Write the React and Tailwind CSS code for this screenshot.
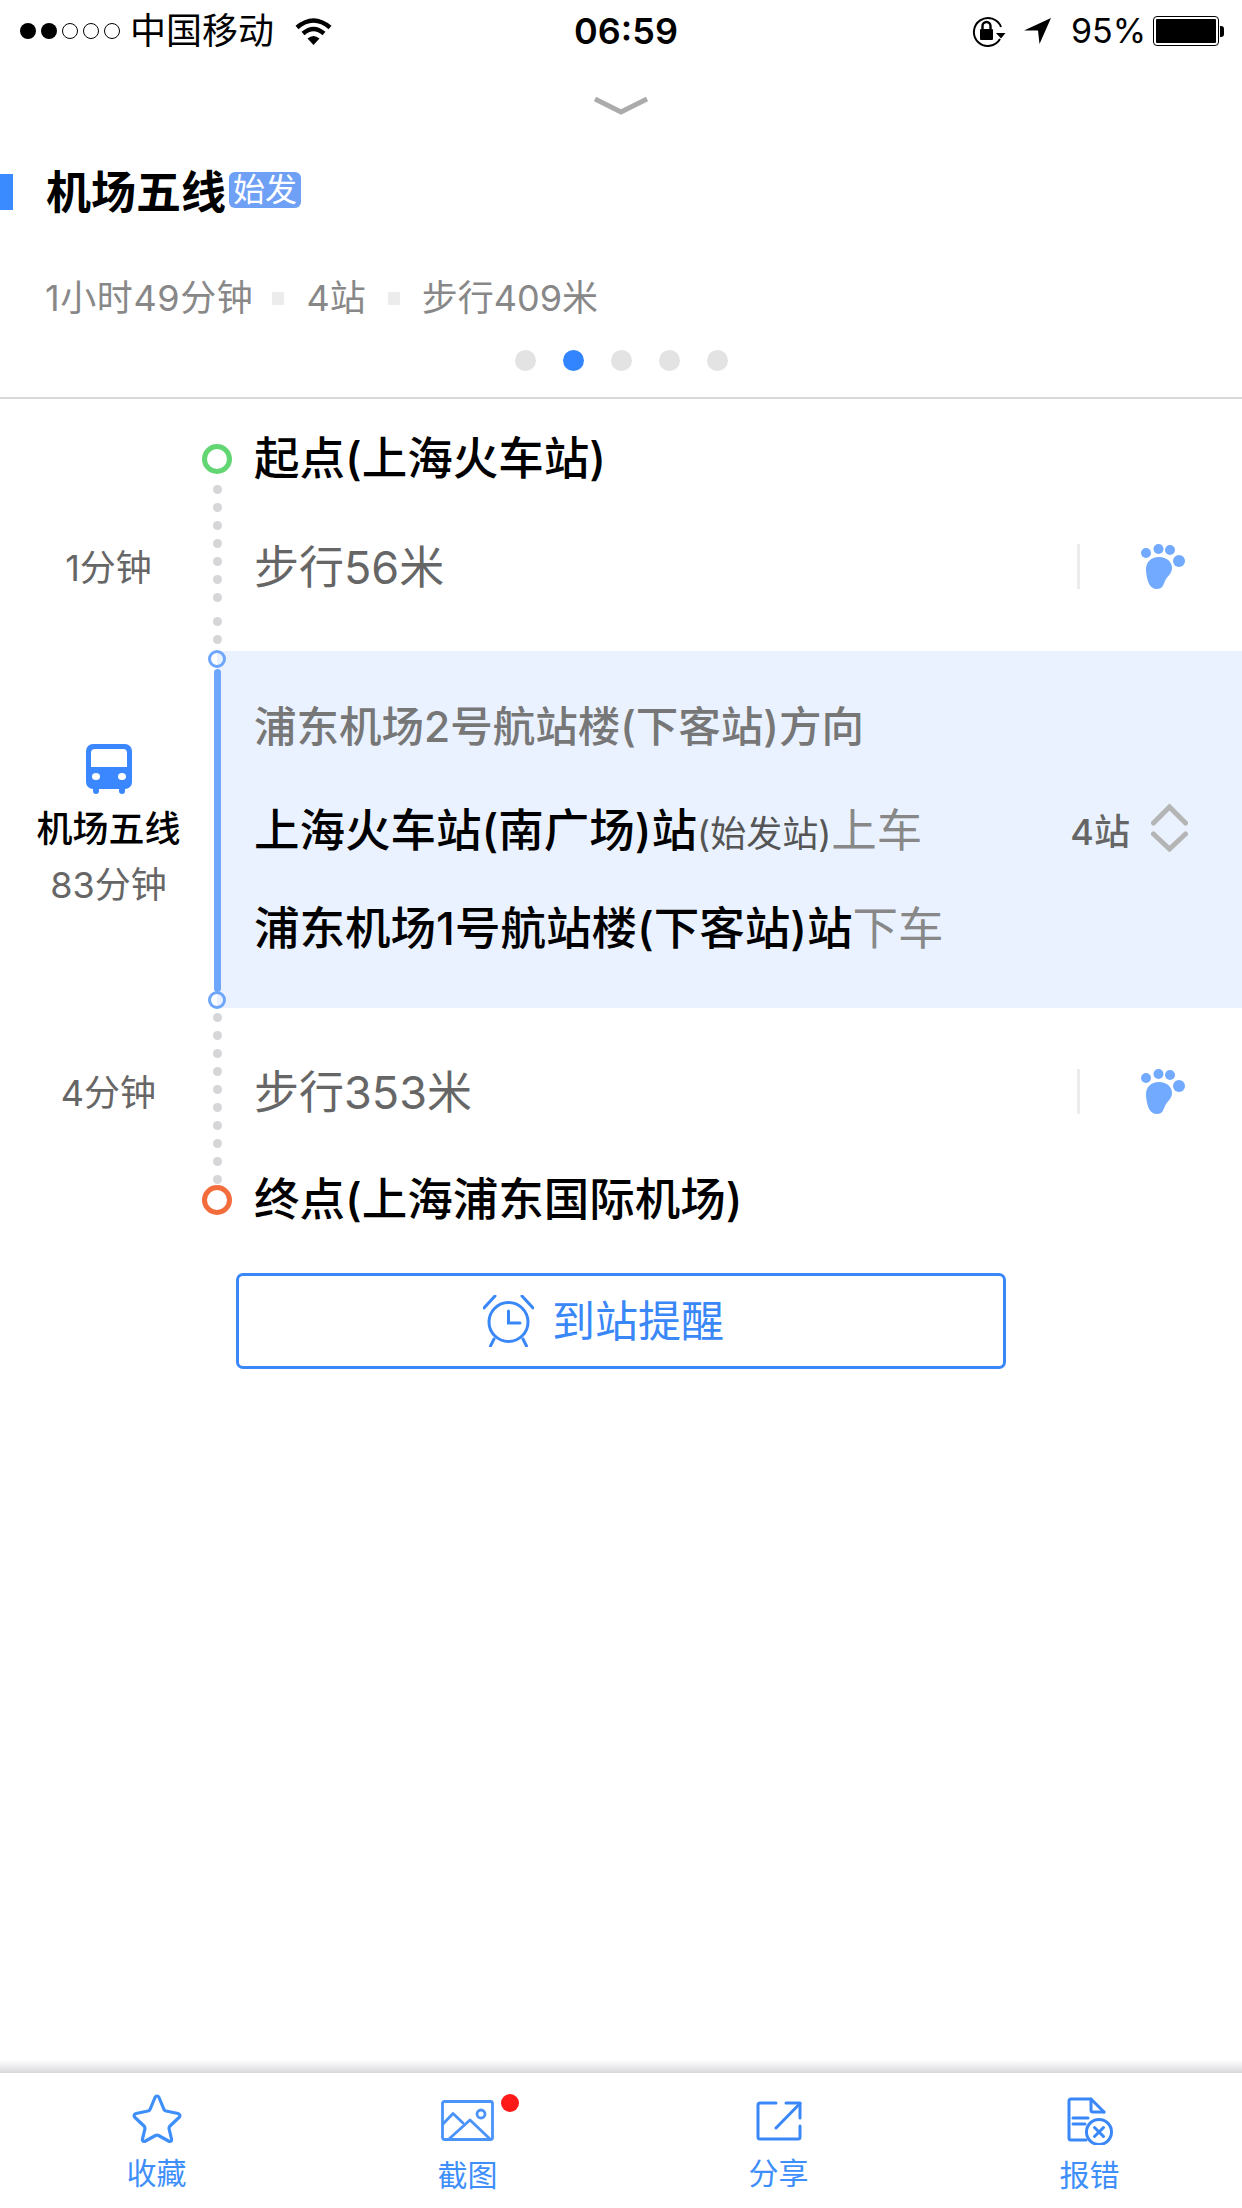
import React from 'react';

const BLUE = '#3a87f8';

const RailDots = ({ count, className = '' }) => (
    <div className={`flex flex-col items-center gap-[9px] ${className}`}>
        {Array.from({ length: count }).map((_, i) => (
            <span key={i} className="w-[9px] h-[9px] rounded-full bg-[#d6d6d9]" />
        ))}
    </div>
);

const Ring = ({ className }) => (
    <span className={`block w-[30px] h-[30px] rounded-full border-[5px] bg-white ${className}`} />
);

const Wifi = () => (
    <svg width="37" height="27" viewBox="0 0 37 27" fill="none" stroke="#000" strokeWidth="4.5">
        <path d="M2 9.5Q18.5 -4.5 35 9.5" />
        <path d="M8 15.5Q18.5 6.5 29 15.5" />
        <path d="M12.5 20.5Q18.5 15.5 24.5 20.5L18.5 27Z" fill="#000" stroke="none" />
    </svg>
);

const RotationLock = () => (
    <svg width="35" height="31" viewBox="0 0 35 31" fill="none">
        <path d="M30 11A14 14 0 1 0 29 23" stroke="#000" strokeWidth="2" />
        <path d="M25 17L34.5 17L30 22.5Z" fill="#000" />
        <rect x="9" y="13" width="13" height="11" rx="1" fill="#000" />
        <path d="M11.5 13V10a4 4 0 0 1 8 0V13" stroke="#000" strokeWidth="2.4" />
    </svg>
);

const LocationArrow = () => (
    <svg width="27" height="26" viewBox="0 0 27 26">
        <path d="M0 12.5L27 0L15.5 26L14 12.5Z" fill="#000" />
    </svg>
);

const Battery = () => (
    <div className="flex items-center">
        <div className="w-[66px] h-[30px] rounded-[4px] border border-black p-[2px]">
            <div className="h-full w-[60px] bg-black rounded-[1px]" />
        </div>
        <div className="w-[4px] h-[11px] ml-[1px] bg-black rounded-r-[3px]" />
    </div>
);

const Foot = () => (
    <svg width="44" height="45" viewBox="0 0 44 45" fill="#72aaff">
        <circle cx="5" cy="9" r="5" />
        <circle cx="17.5" cy="5" r="5" />
        <circle cx="29" cy="6" r="5" />
        <circle cx="38" cy="17" r="6" />
        <path d="M18 13C26 13 31 18 31 24C31 30 26 32 24 37C22 42 21 45 16 45C9 45 6 38 5 27C4.5 18 10 13 18 13Z" />
    </svg>
);

const Bus = () => (
    <svg width="46" height="50" viewBox="0 0 46 50">
        <path d="M7 0H39a7 7 0 0 1 7 7V38a7 7 0 0 1 -7 7H7a7 7 0 0 1 -7 -7V7a7 7 0 0 1 7 -7Z" fill="#3a87ff" />
        <rect x="7" y="42" width="6" height="8" rx="3" fill="#3a87ff" />
        <rect x="33" y="42" width="6" height="8" rx="3" fill="#3a87ff" />
        <path d="M9 5H37a4 4 0 0 1 4 4V23H5V9a4 4 0 0 1 4 -4Z" fill="#fff" />
        <ellipse cx="10" cy="32.5" rx="4" ry="3.5" fill="#fff" />
        <ellipse cx="36" cy="32.5" rx="4" ry="3.5" fill="#fff" />
    </svg>
);

const StopsToggle = () => (
    <svg width="37" height="49" viewBox="0 0 37 49" fill="none" stroke="#b5b5b5" strokeWidth="5" strokeLinecap="round" strokeLinejoin="miter" className="mb-[10px]">
        <path d="M2.5 20L18.5 4L34.5 20" />
        <path d="M2.5 31L18.5 46L34.5 31" />
    </svg>
);

const Alarm = () => (
    <svg width="51" height="52" viewBox="0 0 51 52" fill="none" stroke={BLUE} strokeWidth="3" strokeLinecap="round">
        <circle cx="25.5" cy="27" r="19.5" />
        <path d="M25.5 16V28H37" />
        <path d="M1 13L12 1" />
        <path d="M50 13L39 1" />
        <path d="M11 44L7.5 51" />
        <path d="M40 44L43.5 51" />
    </svg>
);

const StarIcon = () => (
    <svg width="50" height="49" viewBox="0 0 50 49" fill="none" stroke="#3f8ffb" strokeWidth="3.2" strokeLinejoin="round">
        <path d="M23 3.5C24 1.5 26 1.5 27 3.5L32 15.5C32.5 16.5 33 17 34 17L46 19.5C48 20 48.500 22 47 23.500L38 32C37 33 37 33.500 37 34.500L39.500 45C40 47 38.500 48 36.500 47L26.500 41.500C25.500 41 24.500 41 23.500 41.500L13.500 47C11.500 48 10 47 10.500 45L13 34.500C13 33.500 13 33 12 32L3 23.500C1.500 22 2 20 4 19.500L16 17C17 17 17.500 16.500 18 15.500Z" />
    </svg>
);

const ImageIcon = () => (
    <svg width="53" height="41" viewBox="0 0 53 41" fill="none" stroke="#4a93fb" strokeWidth="2.8" strokeLinejoin="round" strokeLinecap="round">
        <rect x="1.500" y="1.500" width="50" height="38" rx="2" />
        <path d="M2 24L12 13.500L22 23" />
        <path d="M8 39L29 20L49 39" />
        <circle cx="40" cy="14" r="4" />
    </svg>
);

const ShareIcon = () => (
    <svg width="46" height="40" viewBox="0 0 46 40" fill="none" stroke={BLUE} strokeWidth="3" strokeLinecap="round" strokeLinejoin="round">
        <path d="M20 2H4a2 2 0 0 0 -2 2V36a2 2 0 0 0 2 2H42a2 2 0 0 0 2 -2V25" />
        <path d="M30 2H44V17" />
        <path d="M20 27L44 2.500" />
    </svg>
);

const ReportIcon = () => (
    <svg width="46" height="48" viewBox="0 0 46 48" fill="none" stroke={BLUE} strokeWidth="3" strokeLinecap="round" strokeLinejoin="round">
        <path d="M19 43H4a2 2 0 0 1 -2 -2V4a2 2 0 0 1 2 -2H24L37 15" />
        <path d="M24 2V13a2 2 0 0 0 2 2H37" />
        <path d="M6 21H21" />
        <path d="M6 27H18" />
        <circle cx="32" cy="35" r="12.500" />
        <path d="M27.500 30.500L36.500 39.500" />
        <path d="M36.500 30.500L27.500 39.500" />
    </svg>
);

const StatusBar = () => (
    <div className="flex h-[62px] items-center text-black">
        <div className="w-[574px] flex items-center pl-[20px]">
            <div className="flex gap-[5px]">
                <span className="w-[16px] h-[16px] rounded-full bg-black" />
                <span className="w-[16px] h-[16px] rounded-full bg-black" />
                <span className="w-[16px] h-[16px] rounded-full border border-black" />
                <span className="w-[16px] h-[16px] rounded-full border border-black" />
                <span className="w-[16px] h-[16px] rounded-full border border-black" />
            </div>
            <span className="ml-[10px] text-[36px] leading-[40px]">中国移动</span>
            <span className="ml-[21px]"><Wifi /></span>
        </div>
        <span className="w-[106px] text-[36px] leading-[40px] font-semibold whitespace-nowrap">06:59</span>
        <div className="flex-1 flex items-center pl-[291px]">
            <RotationLock />
            <span className="ml-[18px]"><LocationArrow /></span>
            <span className="ml-[20px] w-[71px] text-[34px] leading-[40px] whitespace-nowrap">95%</span>
            <span className="ml-[11px]"><Battery /></span>
        </div>
    </div>
);

const RouteHeader = () => (
    <div className="border-b-2 border-[#d9d9d9] h-[337px]">
        <div className="flex justify-center mt-[35px] h-[18px]">
            <svg width="54" height="18" viewBox="0 0 54 18" fill="none" stroke="#ababab" strokeWidth="5" className="blur-[0.5px]">
                <path d="M1 2L27 15L53 2" />
            </svg>
        </div>
        <div className="flex items-center h-[36px] mt-[57px]">
            <div className="w-[13px] h-[36px] mt-[4px] bg-[#3a8bff]" />
            <h1 className="ml-[33px] pt-[6px] text-[45px] leading-[36px] font-bold text-black">机场五线</h1>
            <span className="ml-[3px] w-[72px] h-[36px] rounded-[6px] bg-[#6ea0f6] text-white text-[32px] leading-[36px] text-center">始发</span>
        </div>
        <div className="flex items-center h-[40px] mt-[70px] pl-[45px] text-[36px] leading-[40px] text-[#888]">
            <span className="tracking-[0.6px]">1小时49分钟</span>
            <span className="ml-[19px] w-[12px] h-[13px] bg-[#ececec]" />
            <span className="ml-[22px]">4站</span>
            <span className="ml-[22px] w-[12px] h-[13px] bg-[#ececec]" />
            <span className="ml-[22px]">步行409米</span>
        </div>
        <div className="flex justify-center gap-[27px] mt-[32px]">
            <span className="w-[21px] h-[21px] rounded-full bg-[#e3e3e3]" />
            <span className="w-[21px] h-[21px] rounded-full bg-[#3385ff]" />
            <span className="w-[21px] h-[21px] rounded-full bg-[#e3e3e3]" />
            <span className="w-[21px] h-[21px] rounded-full bg-[#e3e3e3]" />
            <span className="w-[21px] h-[21px] rounded-full bg-[#e3e3e3]" />
        </div>
    </div>
);

const WalkRow = ({ time, text, height, dots, textOffset }) => (
    <div className={`flex ${height}`}>
        <div className={`w-[217px] flex items-center justify-center text-[36px] text-[#666] ${textOffset}`}>{time}</div>
        <div className="w-[30px] -ml-[15px]">{dots}</div>
        <div className={`flex-1 flex items-center justify-between pl-[22px] pr-[57px] ${textOffset}`}>
            <span className="text-[45px] leading-[50px] text-[#666]">{text}</span>
            <div className="flex items-center gap-[61px] mb-[3px]">
                <span className="w-[3px] h-[45px] bg-[#ececec]" />
                <Foot />
            </div>
        </div>
    </div>
);

const Timeline = () => (
    <div className="pt-[45px]">
        <div className="flex items-center h-[30px]">
            <div className="w-[217px]" />
            <div className="w-[30px] -ml-[15px]"><Ring className="border-[#62d673]" /></div>
            <span className="pl-[22px] text-[45.5px] leading-[50px] font-medium text-black">起点(上海火车站)</span>
        </div>
        <WalkRow
            time="1分钟"
            text="步行56米"
            height="h-[177px]"
            textOffset="pt-[11px]"
            dots={
                <div className="pt-[11px]">
                    <RailDots count={7} />
                    <RailDots count={2} className="mt-[15px]" />
                </div>
            }
        />
        <div className="flex h-[357px]">
            <div className="w-[217px] flex flex-col items-center pt-[93px]">
                <Bus />
                <span className="mt-[15px] text-[36px] leading-[40px] font-medium text-black">机场五线</span>
                <span className="mt-[16px] text-[36px] leading-[40px] text-[#666]">83分钟</span>
            </div>
            <div className="relative flex-1 bg-[#eaf2ff] pl-[37px] pr-[54px] pt-[51px]">
                <span className="absolute -left-[9px] top-[-1px] w-[18px] h-[18px] rounded-full border-[3px] border-[#6ea6fb] bg-[linear-gradient(90deg,#fff_50%,#eaf2ff_50%)]" />
                <span className="absolute -left-[3px] top-[18px] w-[7px] h-[323px] rounded-full bg-[#6ea6fb]" />
                <span className="absolute -left-[9px] top-[340px] w-[18px] h-[18px] rounded-full border-[3px] border-[#6ea6fb] bg-[linear-gradient(90deg,#fff_50%,#eaf2ff_50%)]" />
                <p className="text-[42.5px] leading-[50px] font-medium text-[#777]">浦东机场2号航站楼(下客站)方向</p>
                <div className="flex items-center justify-between mt-[55px] h-[50px]">
                    <p className="text-[45.5px] leading-[50px] font-medium text-black whitespace-nowrap">
                        上海火车站(南广场)站
                        <span className="text-[36px] font-normal text-[#555]">(始发站)</span>
                        <span className="font-normal text-[#888]">上车</span>
                    </p>
                    <div className="flex items-center gap-[21px]">
                        <span className="text-[36px] font-medium text-[#666]">4站</span>
                        <StopsToggle />
                    </div>
                </div>
                <p className="mt-[47px] text-[45.5px] leading-[50px] font-medium text-black whitespace-nowrap">
                    浦东机场1号航站楼(下客站)站
                    <span className="font-normal text-[#888]">下车</span>
                </p>
            </div>
        </div>
        <WalkRow
            time="4分钟"
            text="步行353米"
            height="h-[177px]"
            textOffset="pb-[7px]"
            dots={<RailDots count={10} className="pt-[5px]" />}
        />
        <div className="flex items-center h-[30px]">
            <div className="w-[217px]" />
            <div className="w-[30px] -ml-[15px]"><Ring className="border-[#f36c3c]" /></div>
            <span className="pl-[22px] text-[45.5px] leading-[50px] font-medium text-black">终点(上海浦东国际机场)</span>
        </div>
    </div>
);

const ReminderButton = () => (
    <button className="mt-[58px] ml-[236px] w-[770px] h-[96px] flex items-center justify-center gap-[18px] pr-[35px] rounded-[7px] border-[3px] border-[#3a87f8] text-[#3a87f8] text-[43px]">
        <Alarm />
        <span>到站提醒</span>
    </button>
);

const Tab = ({ icon, label, topClass, gapClass, children }) => (
    <div className={`relative flex flex-col items-center ${topClass}`}>
        {icon}
        <span className={`text-[30px] leading-[36px] text-[#3f8ffb] ${gapClass}`}>{label}</span>
        {children}
    </div>
);

const BottomBar = () => (
    <div className="mt-auto">
        <div className="h-[13px] bg-gradient-to-b from-[#ffffff] to-[#d8d8dc]" />
        <div className="h-[135px] w-[1244px] ml-[1px] grid grid-cols-4 bg-white">
            <Tab icon={<StarIcon />} label="收藏" topClass="pt-[21px]" gapClass="mt-[12px]" />
            <Tab icon={<ImageIcon />} label="截图" topClass="pt-[27px]" gapClass="mt-[16px]">
                <span className="absolute top-[21px] left-[189px] w-[18px] h-[18px] rounded-full bg-[#ff1a1a]" />
            </Tab>
            <Tab icon={<ShareIcon />} label="分享" topClass="pt-[28px]" gapClass="mt-[14px]" />
            <Tab icon={<ReportIcon />} label="报错" topClass="pt-[24px]" gapClass="mt-[12px]" />
        </div>
    </div>
);

const App = () => {
    return (
        <div className="w-[1242px] h-[2208px] flex flex-col bg-white overflow-hidden [font-family:Inter,'Noto_Sans_CJK_SC',sans-serif]">
            <StatusBar />
            <RouteHeader />
            <Timeline />
            <ReminderButton />
            <BottomBar />
        </div>
    );
};

export default App;
